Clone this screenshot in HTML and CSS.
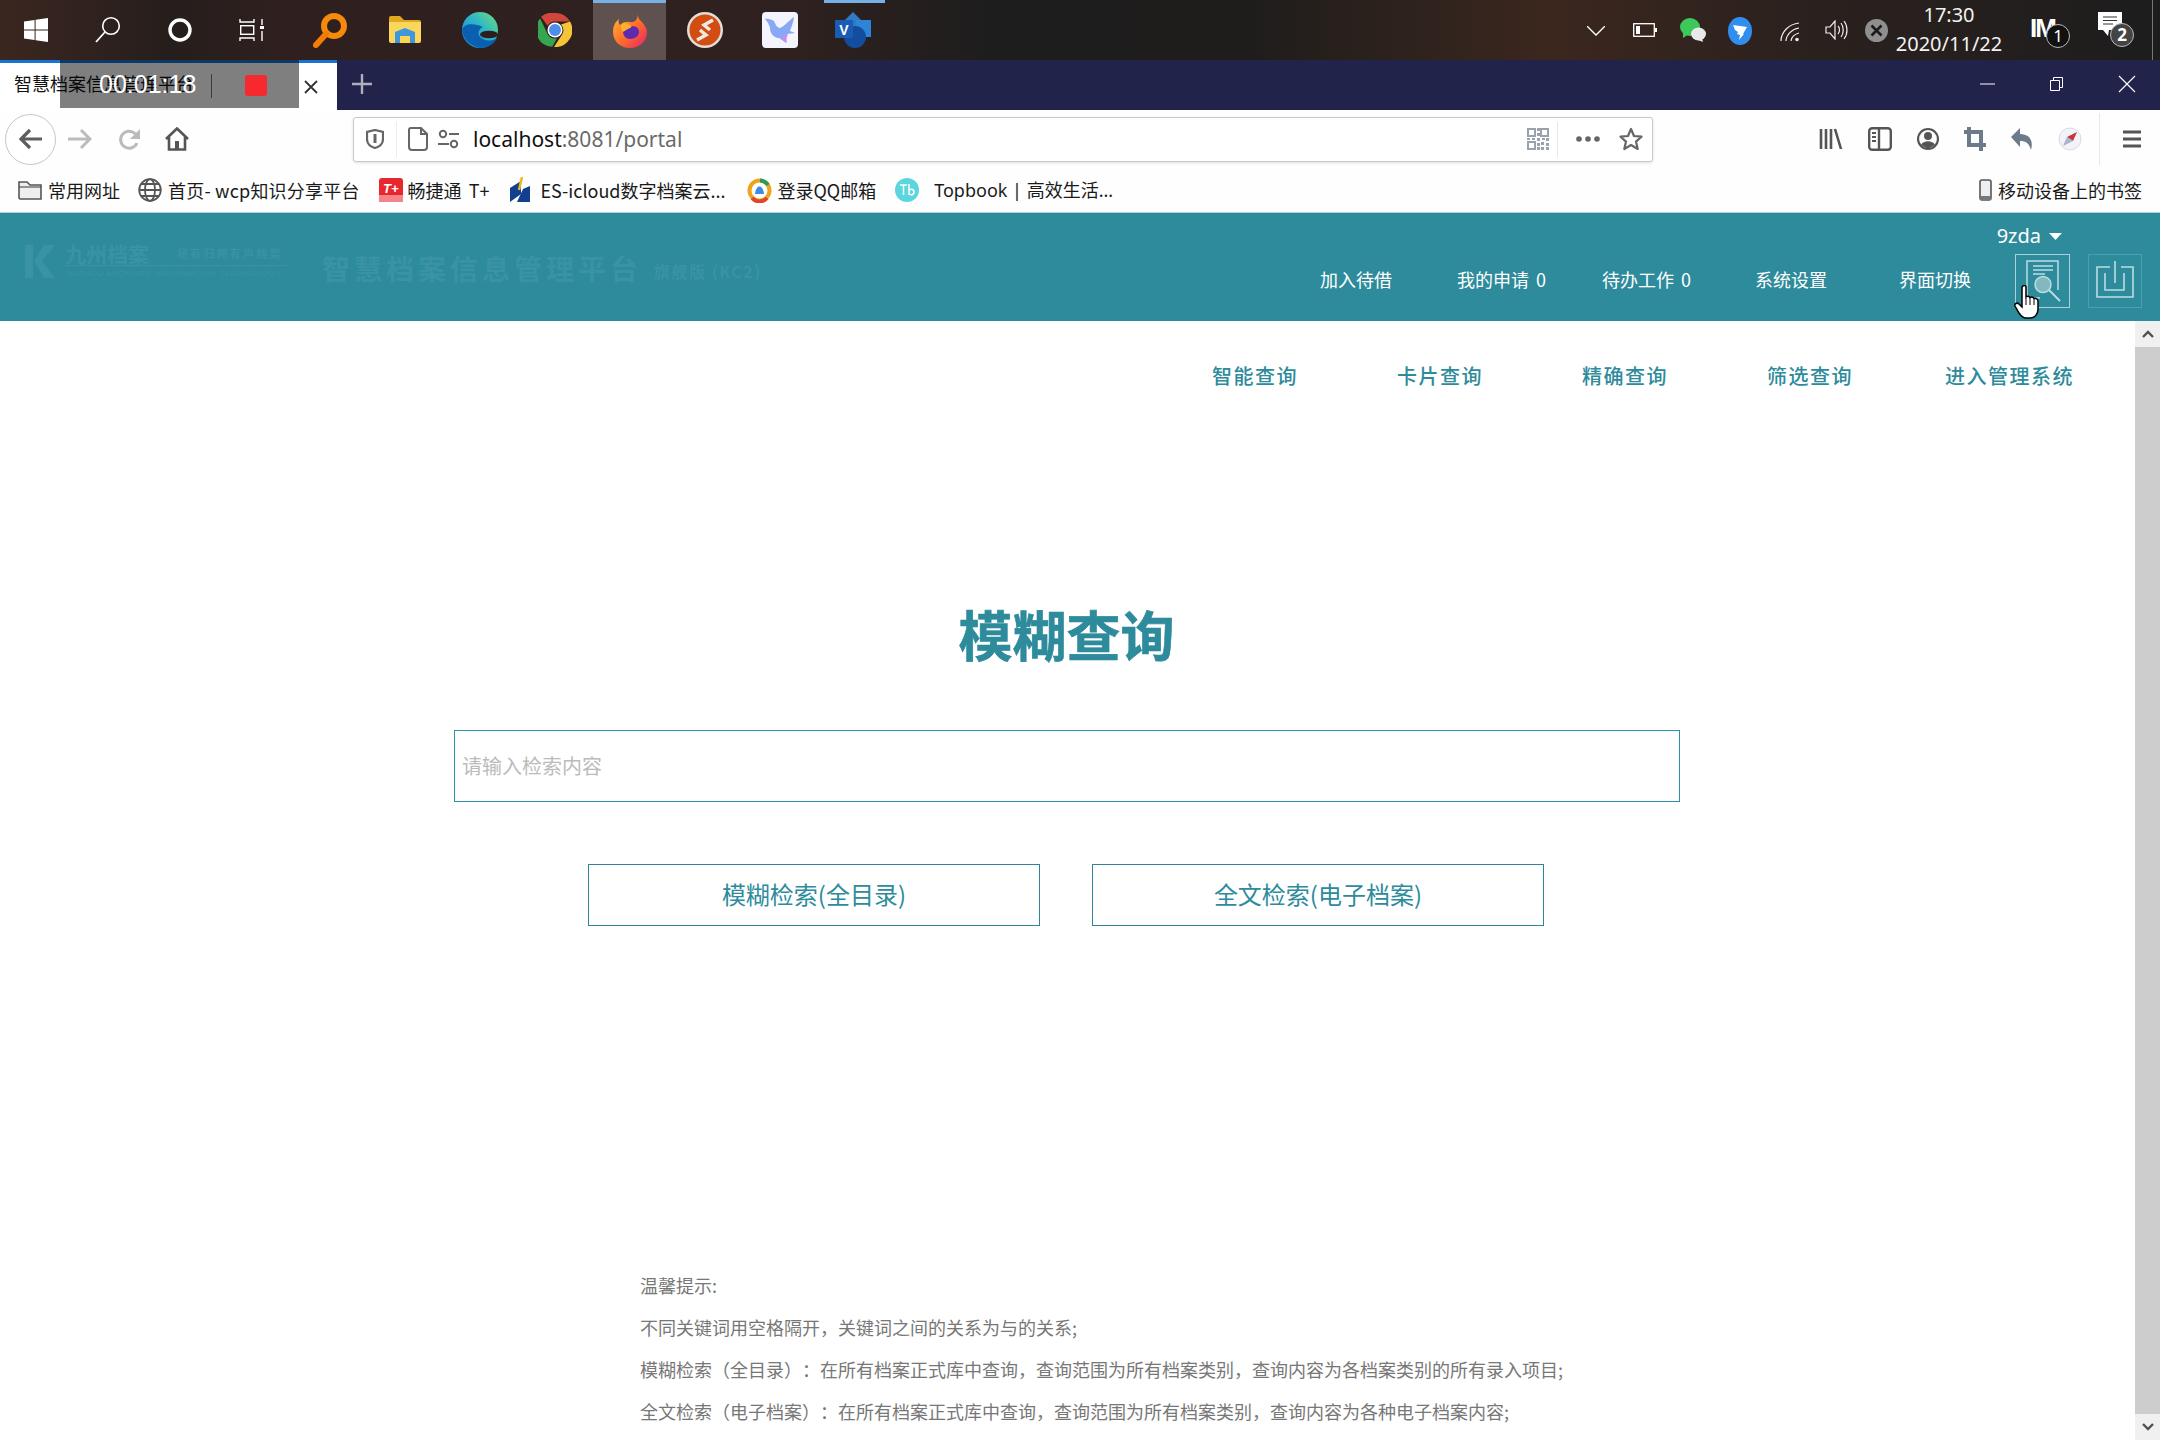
FILE: index.html
```html
<!DOCTYPE html>
<html lang="zh-CN">
<head>
<meta charset="utf-8">
<title>智慧档案信息管理平台</title>
<link rel="stylesheet" href="styles.css">
</head>
<body>
<div class="screen">
  <div class="taskbar">
    <div class="tb-start">
      <span class="tb-sys"><svg width="24" height="24" viewBox="0 0 24 24"><path fill="#fff" d="M0 3.4 10.6 1.9V11.4H0zM11.6 1.8 24 0V11.4H11.6zM0 12.6H10.6V22.1L0 20.6zM11.6 12.6H24V24L11.6 22.2z"/></svg></span>
      <span class="tb-sys"><svg width="26" height="28" viewBox="0 0 26 28"><circle cx="16" cy="10" r="8.3" fill="none" stroke="#fff" stroke-width="1.6"/><path d="M10 16 1 26" stroke="#fff" stroke-width="1.8"/></svg></span>
      <span class="tb-sys"><svg width="24" height="24" viewBox="0 0 24 24"><circle cx="12" cy="12" r="10" fill="none" stroke="#fff" stroke-width="3.4"/></svg></span>
      <span class="tb-sys"><svg width="26" height="24" viewBox="0 0 26 24"><path d="M1 1V4H15V1M1 23V20H15V23" fill="none" stroke="#fff" stroke-width="1.4"/><rect x="1.7" y="7.7" width="13" height="8.6" fill="none" stroke="#fff" stroke-width="1.4"/><path d="M23 1V7M23 13V23" stroke="#fff" stroke-width="1.4"/><rect x="21" y="8" width="4" height="3" fill="#fff"/></svg></span>
    </div>
    <div class="tb-apps">
      <span class="tb-app"><svg width="34" height="36" viewBox="0 0 34 36"><circle cx="21" cy="14" r="10" fill="none" stroke="#f58a0b" stroke-width="6"/><path d="M13 22 3 33" stroke="#f27c05" stroke-width="6" stroke-linecap="round"/></svg></span>
      <span class="tb-app"><svg width="34" height="28" viewBox="0 0 34 28"><path fill="#e0a820" d="M1 2a2 2 0 0 1 2-2H12L16 4H31A2 2 0 0 1 33 6V10H1z"/><path fill="#fad65c" d="M1 6H33V25A2 2 0 0 1 31 27H3A2 2 0 0 1 1 25z"/><path fill="#3f97dc" d="M7 27V16L17 12 27 16V27H22V20H12V27z"/><rect x="12" y="21" width="10" height="6" fill="#fbd650"/></svg></span>
      <span class="tb-app"><svg width="36" height="36" viewBox="0 0 36 36"><defs><linearGradient id="eg" x1="0" y1="1" x2="1" y2="0"><stop offset="0" stop-color="#1a86d8"/><stop offset=".55" stop-color="#2db5c8"/><stop offset="1" stop-color="#72e07c"/></linearGradient></defs><circle cx="18" cy="18" r="18" fill="url(#eg)"/><path fill="#0b5fb0" d="M0 18C1 27 8 34 18 36 26 36 32 32 35 26 28 30 22 29 18 25 15 21 17 17 21 15 12 11 2 11 0 18z"/><ellipse cx="27" cy="22.500" rx="9" ry="3.800" fill="#2b1f1f"/></svg></span>
      <span class="tb-app"><svg width="34" height="34" viewBox="0 0 34 34"><path fill="#d1463a" d="M17 0A17 17 0 0 1 32 8.500H17A8.500 8.500 0 0 0 9.600 12.800L3 3.800A17 17 0 0 1 17 0z"/><path fill="#36a550" d="M2.200 5.500 9.700 21.300A8.500 8.500 0 0 0 19 25.300L14.200 33.800A17 17 0 0 1 2.200 5.500z"/><path fill="#f5c437" d="M32 8.500A17 17 0 0 1 16 34L24.300 21.300A8.500 8.500 0 0 0 23 11.500z"/><circle cx="17" cy="17" r="7.500" fill="#fff"/><circle cx="17" cy="17" r="6" fill="#4d8fe8"/></svg></span>
      <span class="tb-app active"><svg width="34" height="36" viewBox="0 0 34 36"><defs><linearGradient id="ff" x1="0" y1="0" x2="1" y2="1"><stop offset="0" stop-color="#ffbd2e"/><stop offset=".55" stop-color="#ff6a2a"/><stop offset="1" stop-color="#e3206e"/></linearGradient></defs><path fill="url(#ff)" d="M24 0c1 4 1 6 4 9 4 4 6 8 6 11 0 9-7 16-17 16S0 29 0 20c0-6 2-10 6-13-1 3 0 5 1 6 2-3 7-4 10-3 6 1 9-4 7-10z"/><path fill="#5e2bb0" d="M10 19c1-4 5-5 9-5 5 0 7 3 7 6 0 4-4 7-9 7-4 0-7-3-7-8z"/><path fill="#ffb02e" d="M8 13c3-3 6-2 9 0 2 1 2 2 0 3-3 1-5 3-7 4-1-2-3-4-2-7z"/></svg></span>
      <span class="tb-app"><svg width="36" height="36" viewBox="0 0 36 36"><circle cx="18" cy="18" r="18" fill="#e3ddd8"/><circle cx="18" cy="18" r="15.500" fill="#d24d12"/><path d="M26 8 17 13 23 18M13 18 19 23 10 28" fill="none" stroke="#f1e8e3" stroke-width="3.400"/></svg></span>
      <span class="tb-app"><svg width="36" height="36" viewBox="0 0 36 36"><rect width="36" height="36" rx="4" fill="#f4f4fd"/><path fill="#86a8f5" d="M3 7c3-1 7 1 9 2 2 5 4 7 6 7 5-2 8-7 14-11-1 7-3 11-4 14l5 2-8 1c-2 3-3 4-1 9-4-3-6-5-8-5-5-1-8-5-8-10C7 12 5 9 3 7z"/><path fill="#c48df0" d="M19 25c2-2 5-2 7-3-1 3-2 4-1 9-3-2-5-4-6-6z"/></svg></span>
      <span class="tb-app app-visio"><svg width="36" height="36" viewBox="0 0 36 36"><path fill="#2e7cc9" d="M18 0 27 9 18 18 9 9z"/><rect x="21" y="8" width="15" height="17" fill="#2e84d8"/><circle cx="20" cy="25" r="11" fill="#134d9e"/><rect x="0" y="8" width="18" height="18" rx="1" fill="#1a5cb4"/><text class="visio-v" x="9" y="23">V</text></svg></span>
    </div>
    <div class="tray">
      <svg class="t-chev" width="18" height="10" viewBox="0 0 18 10"><path d="M0 0 9 9 18 0" fill="none" stroke="#fff" stroke-width="1.300"/></svg>
      <svg class="t-batt" width="24" height="14" viewBox="0 0 24 14"><rect x=".7" y=".7" width="20.600" height="12.600" fill="none" stroke="#fff" stroke-width="1.300"/><rect x="3" y="3" width="4" height="8" fill="#fff"/><rect x="22" y="5" width="2" height="4" fill="#fff"/></svg>
      <svg class="t-wx" width="26" height="25" viewBox="0 0 26 25"><ellipse cx="10" cy="9" rx="10" ry="9" fill="#3dc95a"/><path d="M3 14 3 20 9 16z" fill="#3dc95a"/><ellipse cx="18.500" cy="16" rx="7.500" ry="6.500" fill="#e9e9e9"/><path d="M22 20l1 4-5-2z" fill="#e9e9e9"/></svg>
      <svg class="t-ding" width="24" height="28" viewBox="0 0 24 28"><ellipse cx="12" cy="14" rx="12" ry="14" fill="#2f8ef0"/><path fill="#fff" d="M5 8 19 10 15 17 16 17 11 23 12 18 9 17 10 15 7 13z"/></svg>
      <svg class="t-wifi" width="20" height="20" viewBox="0 0 20 20"><g fill="none" stroke="#eee" stroke-width="1.200"><path d="M1 19C1 10 9 2 19 1"/><path d="M6 19C6 13 12 7 19 6"/><path d="M11 19C11 15 15 12 19 11"/></g><circle cx="17" cy="17.500" r="1.800" fill="#eee"/></svg>
      <svg class="t-vol" width="23" height="20" viewBox="0 0 23 20"><path d="M1 7H5L10 1V19L5 13H1z" fill="none" stroke="#eee" stroke-width="1.200"/><path d="M13 6C15 8 15 12 13 14M16 3C19 7 19 13 16 17M19 1C23 6 23 14 19 19" fill="none" stroke="#eee" stroke-width="1.200"/></svg>
      <svg class="t-x" width="23" height="23" viewBox="0 0 23 23"><circle cx="11.500" cy="11.500" r="11.500" fill="#8f8f8f"/><path d="M6.500 6.500 16.500 16.500M16.500 6.500 6.500 16.500" stroke="#1c1c1c" stroke-width="2.600"/></svg>
      <div class="clock"><span>17:30</span><span>2020/11/22</span></div>
      <div class="t-m"><span class="t-m-l">IM</span><span class="t-badge dark">1</span></div>
      <div class="t-note"><svg width="24" height="28" viewBox="0 0 24 28"><path fill="#fff" d="M0 0H24V18H11L10 24 5 18H0z"/><path d="M5 5H19M5 8.500H19M5 12H15" stroke="#333" stroke-width="1.200"/></svg><span class="t-badge gray">2</span></div>
      <i class="t-edge"></i>
    </div>
  </div>

  <div class="tabstrip">
    <div class="tab"><span class="tab-title">智慧档案信息管理平台</span>
      <svg class="tab-x" width="14" height="14" viewBox="0 0 14 14"><path d="M1 1 13 13M13 1 1 13" stroke="#333" stroke-width="1.800"/></svg>
    </div>
    <svg class="tab-plus" width="20" height="20" viewBox="0 0 20 20"><path d="M10 0V20M0 10H20" stroke="#aeaebc" stroke-width="2.400"/></svg>
    <div class="winctl">
      <svg width="16" height="16" viewBox="0 0 16 16"><path d="M0 8H15" stroke="#fff" stroke-width="1"/></svg>
      <svg width="16" height="16" viewBox="0 0 16 16"><path d="M1.500 4.500H10.500V14.500H1.500zM4.500 4.500V1.500H13.500V11.500H10.500" fill="none" stroke="#fff" stroke-width="1"/></svg>
      <svg width="18" height="18" viewBox="0 0 18 18"><path d="M1 1 17 17M17 1 1 17" stroke="#fff" stroke-width="1.100"/></svg>
    </div>
    <div class="recorder">
      <span class="rec-time">00:01:18</span>
      <i class="rec-div"></i>
      <i class="rec-stop"></i>
    </div>
  </div>

  <div class="toolbar">
    <div class="nav-btns">
      <span class="back"><svg width="26" height="22" viewBox="0 0 26 22"><path d="M24 11H3M12 2 3 11 12 20" fill="none" stroke="#5e5e5e" stroke-width="3.200"/></svg></span>
      <svg class="n-fwd" width="24" height="22" viewBox="0 0 24 22"><path d="M0 11H21M13 2 22 11 13 20" fill="none" stroke="#bbb" stroke-width="3"/></svg>
      <svg class="n-rel" width="23" height="23" viewBox="0 0 23 23"><path d="M19 15A8.500 8.500 0 1 1 17 5.500L20 8.500" fill="none" stroke="#bbb" stroke-width="3"/><path d="M22 1V11H12z" fill="#bbb"/></svg>
      <svg class="n-home" width="24" height="24" viewBox="0 0 24 24"><path d="M1 12 12 1.500 23 12M4 10V22.500H20V10" fill="none" stroke="#555" stroke-width="2.600"/><rect x="10" y="14" width="4" height="8" fill="#555"/></svg>
    </div>
    <div class="urlbar">
      <svg class="u-shield" width="18" height="20" viewBox="0 0 18 20"><path d="M9 1 17 3V10C17 15 13 18 9 19 5 18 1 15 1 10V3z" fill="none" stroke="#666" stroke-width="2.200"/><path d="M9 5V14" stroke="#666" stroke-width="3"/></svg>
      <i class="u-sep"></i>
      <svg class="u-page" width="20" height="24" viewBox="0 0 20 24"><path d="M3 1H13L19 7V20A3 3 0 0 1 16 23H4A3 3 0 0 1 1 20V3A2 2 0 0 1 3 1zM13 1V7H19" fill="none" stroke="#666" stroke-width="2"/></svg>
      <svg class="u-perm" width="21" height="20" viewBox="0 0 21 20"><circle cx="5" cy="5" r="3.200" fill="none" stroke="#666" stroke-width="2"/><circle cx="16" cy="15" r="3.200" fill="none" stroke="#666" stroke-width="2"/><path d="M11 5H21M0 15H11" stroke="#666" stroke-width="2.200"/></svg>
      <span class="u-text"><b>localhost</b>:8081/portal</span>
      <svg class="u-qr" width="22" height="22" viewBox="0 0 22 22"><g fill="none" stroke="#9aa3ad" stroke-width="2"><rect x="1" y="1" width="7" height="7"/><rect x="14" y="1" width="7" height="7"/><rect x="1" y="14" width="7" height="7"/></g><path fill="#9aa3ad" d="M10 0h3v3h-3zM10 5h3v3h-3zM0 10h3v2h-3zM5 10h3v2h-3zM10 10h3v3h-3zM15 10h3v2h-3zM19 10h3v3h-3zM10 15h3v3h-3zM14 14h3v3h-3zM19 15h3v3h-3zM14 19h3v3h-3zM19 19h3v3h-3zM10 19h3v3h-3z"/></svg>
      <i class="u-sep2"></i>
      <svg class="u-dots" width="24" height="6" viewBox="0 0 24 6"><circle cx="3" cy="3" r="2.800" fill="#666"/><circle cx="12" cy="3" r="2.800" fill="#666"/><circle cx="21" cy="3" r="2.800" fill="#666"/></svg>
      <svg class="u-star" width="24" height="24" viewBox="0 0 24 24"><path d="M12 2 15 9 22.500 9.700 17 14.600 18.700 22 12 18 5.300 22 7 14.600 1.500 9.700 9 9z" fill="none" stroke="#666" stroke-width="2.200" stroke-linejoin="round"/></svg>
    </div>
    <div class="tools">
      <svg width="24" height="24" viewBox="0 0 24 24"><path d="M2 2V22M7 2V22M12 2V22M16 2 22 22" fill="none" stroke="#555" stroke-width="2.600"/></svg>
      <svg width="24" height="24" viewBox="0 0 24 24"><rect x="1.200" y="1.200" width="21.600" height="21.600" rx="3" fill="none" stroke="#555" stroke-width="2.400"/><path d="M11 1V23" stroke="#555" stroke-width="2.400"/><path d="M4 6H8M4 10H8M4 14H8" stroke="#555" stroke-width="2"/></svg>
      <svg width="22" height="24" viewBox="0 0 22 24"><circle cx="11" cy="12" r="10" fill="none" stroke="#555" stroke-width="2.200"/><circle cx="11" cy="9" r="4" fill="#555"/><path d="M4 18C6 13 16 13 18 18L11 22z" fill="#555"/></svg>
      <svg width="22" height="24" viewBox="0 0 22 24"><path d="M5 0V18H22M0 5H17V24" fill="none" stroke="#6d7a8a" stroke-width="4"/></svg>
      <svg width="22" height="24" viewBox="0 0 22 24"><path d="M9 1V7C17 7 23 12 20 23 18 16 15 14 9 14V20L0 10z" fill="#6d7a8a"/></svg>
      <svg width="24" height="24" viewBox="0 0 24 24"><circle cx="12" cy="12" r="11" fill="#f2f3f7" stroke="#d6dbe6"/><path d="M19 5 15 14 9 10z" fill="#c9343e"/><path d="M5 19 15 14 9 10z" fill="#aab4cf"/></svg>
      <i class="tools-sep"></i>
      <svg width="18" height="18" viewBox="0 0 18 18"><path d="M0 2H18M0 9H18M0 16H18" stroke="#555" stroke-width="3"/></svg>
    </div>
  </div>

  <div class="bookmarks">
    <span class="bm b1"><svg width="24" height="20" viewBox="0 0 24 20"><path d="M1 18V2H9L12 5H23V19H2z" fill="#eee" stroke="#555" stroke-width="1.600"/><path d="M1 7H23" stroke="#555" stroke-width="1.200"/></svg>常用网址</span>
    <span class="bm b2"><svg width="24" height="24" viewBox="0 0 24 24"><g fill="none" stroke="#555" stroke-width="1.800"><circle cx="12" cy="12" r="10.800"/><ellipse cx="12" cy="12" rx="5" ry="10.800"/><path d="M1 12H23M3 6H21M3 18H21"/></g></svg>首页- wcp知识分享平台</span>
    <span class="bm b3"><svg width="24" height="24" viewBox="0 0 24 24"><rect width="24" height="24" rx="3" fill="#e8262e"/><rect y="17" width="24" height="7" fill="#f4848a"/><text class="bm-t" x="4" y="15">T+</text></svg>畅捷通 T+</span>
    <span class="bm b4"><svg width="23" height="26" viewBox="0 0 23 26"><path d="M2 11 13 4V17L2 25z" fill="#12408f"/><path d="M14 0 11 13" stroke="#f0b429" stroke-width="2.500"/><path d="M15 12 22 9V25H9z" fill="#12408f"/></svg>ES-icloud数字档案云...</span>
    <span class="bm b5"><svg width="25" height="25" viewBox="0 0 25 25"><circle cx="12.500" cy="12.500" r="10" fill="#fff" stroke="#f0a41c" stroke-width="4"/><path d="M5 20A10 10 0 0 0 20 20" fill="none" stroke="#e2452e" stroke-width="4"/><path d="M21 7A10 10 0 0 0 13 2.500" fill="none" stroke="#2b9a55" stroke-width="4"/><path d="M8 16C9 6 16 6 17 16z" fill="#3a8de0"/></svg>登录QQ邮箱</span>
    <span class="bm b6"><svg width="24" height="24" viewBox="0 0 24 24"><circle cx="12" cy="12" r="12" fill="#5cd6de"/><path d="M5 7H12M8.500 7V17M14 6V17M14 13C15 10 19 11 19 14S15 18 14 15" fill="none" stroke="#fff" stroke-width="1.500"/></svg><span class="b6-t">Topbook | 高效生活...</span></span>
    <span class="bm b7"><svg width="13" height="22" viewBox="0 0 13 22"><rect x="1" y="1" width="11" height="20" rx="2" fill="#eee" stroke="#555" stroke-width="1.600"/><rect x="1" y="17" width="11" height="4" fill="#777"/></svg>移动设备上的书签</span>
  </div>

  <header class="apphead">
    <div class="brand">
      <div class="logo">
        <svg width="30" height="33" viewBox="0 0 30 33"><path d="M0 0H8V33H0zM30 0 17 16 30 33H19L9 16 19 0z" fill="#3a93a2"/></svg>
        <div class="logo-txt">
          <div class="logo-top"><span>九州档案</span><small>秘有归朔有声档案</small></div>
          <div class="logo-en">JIUZHOU ARCHIVES INFORMATION TECHNOLOGY</div>
        </div>
      </div>
      <div class="brand-name">智慧档案信息管理平台</div>
      <div class="brand-ed">旗舰版 (KC2)</div>
    </div>
    <div class="headright">
      <div class="user">9zda<svg width="13" height="7" viewBox="0 0 13 7"><path d="M0 0H13L6.500 7z" fill="#fff"/></svg></div>
      <div class="headnav">
        <nav class="mainnav">
          <a>加入待借</a><a>我的申请 0</a><a>待办工作 0</a><a>系统设置</a><a>界面切换</a>
        </nav>
        <span class="hbtn on"><svg width="36" height="42" viewBox="0 0 36 42"><g fill="none" stroke="#bcdde2" stroke-width="1.500"><path d="M33 30V1H2V38H15"/><path d="M8 6H28M8 10H28M8 14H20"/><circle cx="18" cy="24.500" r="8" fill="#a7cdd2" fill-opacity=".7"/><path d="M24 30 35 41" stroke-width="2"/></g></svg></span>
        <span class="hbtn"><svg width="38" height="40" viewBox="0 0 38 40"><g fill="none" stroke="#bcdde2" stroke-width="1.600"><path d="M14 6H1V36H37V6H25"/><path d="M9 12V29H28V12"/><path d="M19 0V22"/></g></svg></span>
      </div>
    </div>
  </header>

  <div class="page">
    <main class="content">
      <nav class="subnav">
        <a>智能查询</a><a>卡片查询</a><a>精确查询</a><a>筛选查询</a><a>进入管理系统</a>
      </nav>
      <h1 class="title">模糊查询</h1>
      <div class="searchbox"><input class="search" type="text" placeholder="请输入检索内容"></div>
      <div class="actions">
        <button class="act">模糊检索(全目录)</button>
        <button class="act">全文检索(电子档案)</button>
      </div>
      <div class="tips">
        <p>温馨提示:</p>
        <p>不同关键词用空格隔开，关键词之间的关系为与的关系;</p>
        <p>模糊检索（全目录）：在所有档案正式库中查询，查询范围为所有档案类别，查询内容为各档案类别的所有录入项目;</p>
        <p>全文检索（电子档案）：在所有档案正式库中查询，查询范围为所有档案类别，查询内容为各种电子档案内容;</p>
      </div>
    </main>
    <aside class="scrollbar">
      <span class="sb-btn"><svg width="12" height="8" viewBox="0 0 12 8"><path d="M1 7 6 2 11 7" fill="none" stroke="#505050" stroke-width="2.400"/></svg></span>
      <i class="sb-thumb"></i>
      <span class="sb-btn"><svg width="12" height="8" viewBox="0 0 12 8"><path d="M1 1 6 6 11 1" fill="none" stroke="#505050" stroke-width="2.400"/></svg></span>
    </aside>
  </div>

  <svg class="cursor" width="26" height="34" viewBox="0 0 26 34"><path d="M8 2C9 0 12 0 12 2V12C13 11 15 11 16 12.500 17 12 19 12 20 13.500 22 13 24 14 24 16V24C24 29 21 33 16 33H12C9 33 7 31 5 28L1 21C0 19 3 17 5 19L8 22z" fill="#fff" stroke="#000" stroke-width="1.500"/><path d="M12 13V20M16 13V20M20 14V20" stroke="#000" stroke-width="1"/></svg>
</div>
</body>
</html>
```

FILE: styles.css
```css
* { box-sizing: border-box; }
html, body { margin: 0; padding: 0; }
body { width: 2160px; height: 1440px; overflow: hidden; background: #fff; font-family: "Noto Sans CJK SC", "Noto Sans", sans-serif; color: #111; text-spacing-trim: space-all; }
.screen { position: relative; width: 2160px; height: 1440px; display: flex; flex-direction: column; overflow: hidden; }

/* taskbar */
.taskbar { height: 60px; flex: none; display: flex; align-items: stretch; background: linear-gradient(90deg, #3b2620 0, #261e1c 170px, #2f201f 290px, #2e211f 800px, #1d1d1d 1000px, #1f1d1c 1250px, #3b271e 1550px, #2b211e 1800px, #1d1d1d 2160px); }
.tb-start { display: flex; width: 293px; flex: none; }
.tb-sys { width: 72px; display: flex; align-items: center; justify-content: center; }
.tb-apps { display: flex; gap: 2px; }
.tb-app { width: 73px; display: flex; align-items: center; justify-content: center; border-top: 3px solid transparent; padding-bottom: 3px; }
.tb-app.active { background: #5f5150; border-top-color: #76b0e4; }
.app-visio { border-top-color: #76b0e4; margin-left: 6px; width: 61px; padding-right: 3px; }
.visio-v { font: 700 14px "Liberation Sans", sans-serif; fill: #fff; text-anchor: middle; }
.tray { margin-left: auto; display: flex; align-items: center; width: 574px; flex: none; position: relative; }
.t-chev { margin-left: 1px; margin-top: 2px; }
.t-batt { margin-left: 28px; }
.t-wx { margin-left: 23px; }
.t-ding { margin-left: 22px; margin-top: 2px; }
.t-wifi { margin-left: 28px; margin-top: 3px; }
.t-vol { margin-left: 25px; }
.t-x { margin-left: 17px; }
.clock { width: 112px; margin-left: 5px; display: flex; flex-direction: column; align-items: center; color: #f2f2f2; font: 20px/1 "Noto Sans", sans-serif; gap: 9px; margin-top: -1px; }
.t-m { position: relative; width: 36px; height: 30px; margin-left: 25px; margin-top: -2px; }
.t-m-l { color: #fff; font: 700 26px/28px "Liberation Sans", sans-serif; letter-spacing: -2px; }
.t-badge { position: absolute; width: 24px; height: 24px; border-radius: 50%; border: 1px solid #bbb; color: #fff; font: 700 17px/22px "Noto Sans", sans-serif; text-align: center; }
.t-badge.dark { background: #111; right: -4px; top: 10px; font-weight: 400; }
.t-badge.gray { background: #444; left: 12px; top: 11px; }
.t-note { position: relative; width: 38px; height: 36px; margin-left: 32px; margin-top: -1px; }
.t-note svg { display: block; }
.t-edge { position: absolute; right: 7px; top: 0; bottom: 0; width: 1px; background: #777; }

/* tab strip */
.tabstrip { position: relative; height: 50px; flex: none; background: #21234a; display: flex; align-items: stretch; }
.tab { width: 337px; background: #fff; border-top: 3px solid #1a73d0; display: flex; align-items: center; justify-content: space-between; padding: 0 19px 0 14px; }
.tab-title { font-size: 18px; color: #111; line-height: 44px; white-space: nowrap; margin-top: -8px; }
.tab-plus { align-self: center; margin: -2px 0 0 15px; }
.winctl { margin-left: auto; display: flex; align-items: center; gap: 53px; padding: 0 24px 2px 0; }
.recorder { position: absolute; left: 60px; top: 0; width: 239px; height: 48px; background: rgba(0, 0, 0, .5); display: flex; align-items: center; }
.rec-time { color: #fff; font: 25px/1 "Liberation Sans", sans-serif; margin-left: 39px; width: 112px; white-space: nowrap; padding-top: 1px; }
.rec-div { width: 1px; height: 24px; background: #3c3c3c; margin-top: 3px; }
.rec-stop { width: 22px; height: 21px; border-radius: 3px; background: #f62a2e; margin-left: 33px; margin-top: 3px; }

/* toolbar */
.toolbar { height: 68px; flex: none; background: #fefefe; display: flex; align-items: center; padding-bottom: 10px; }
.nav-btns { width: 353px; flex: none; display: flex; align-items: center; padding-left: 5px; }
.back { width: 51px; height: 51px; border: 1px solid #c6c6c6; border-radius: 50%; display: flex; align-items: center; justify-content: center; background: #fff; }
.n-fwd { margin-left: 12px; }
.n-rel { margin-left: 26px; }
.n-home { margin-left: 24px; }
.urlbar { width: 1300px; height: 45px; flex: none; background: #fff; border: 1px solid #c9c9c9; border-radius: 3px; box-shadow: 0 1px 3px rgba(0, 0, 0, .12); display: flex; align-items: center; padding-left: 12px; }
.u-sep { width: 1px; height: 35px; background: #ececec; margin-left: 12px; }
.u-page { margin-left: 11px; }
.u-perm { margin-left: 10px; }
.u-text { margin-left: 14px; font: 21px/1 "Noto Sans", sans-serif; color: #6a6a6a; width: 1054px; flex: none; white-space: nowrap; }
.u-text b { font-weight: 400; color: #111; }
.u-sep2 { width: 1px; height: 35px; background: #e6e6e6; margin-left: 8px; }
.u-qr { flex: none; }
.u-dots { margin-left: 18px; }
.u-star { margin-left: 19px; }
.tools { display: flex; align-items: center; margin-left: 166px; gap: 25px; }
.tools-sep { width: 1px; height: 52px; background: #e6e6e6; margin: 0 -2px 0 -8px; }

/* bookmarks */
.bookmarks { height: 34px; flex: none; background: #fefefe; display: flex; align-items: center; padding-left: 18px; padding-bottom: 10px; }
.bm { display: inline-flex; align-items: center; gap: 6px; font-size: 18px; color: #1a1a1a; white-space: nowrap; line-height: 26px; }
.b2 { margin-left: 18px; letter-spacing: .2px; }
.b3 { margin-left: 19px; gap: 5px; word-spacing: 3px; }
.b4 { margin-left: 19px; gap: 9px; }
.b5 { margin-left: 21px; gap: 6px; }
.b6 { margin-left: 19px; gap: 15px; }
.b6-t { font-family: "Noto Sans", "Noto Sans CJK SC", sans-serif; }
.b7 { margin-left: auto; margin-right: 18px; }
.bm-t { font: italic 700 13px "Liberation Sans", sans-serif; fill: #fff; }

/* app header */
.apphead { height: 109px; flex: none; background: #2d8b9c; border-top: 1px solid #a9d4dc; display: flex; justify-content: space-between; }
.brand { display: flex; align-items: center; padding: 4px 0 0 25px; color: #3a93a2; height: 90px; margin-top: 8px; }
.logo { display: flex; align-items: center; gap: 10px; width: 293px; flex: none; margin-top: -14px; }
.logo-txt { width: 222px; }
.logo-top { display: flex; align-items: center; gap: 28px; font-size: 21px; font-weight: 700; line-height: 24px; border-bottom: 1px solid #3a93a2; white-space: nowrap; }
.logo-top small { font-size: 11px; letter-spacing: 2.2px; font-weight: 700; }
.logo-en { font: 8px/16px "Liberation Sans", sans-serif; white-space: nowrap; letter-spacing: .6px; }
.brand-name { font-size: 28px; font-weight: 700; letter-spacing: 4px; margin-left: 4px; white-space: nowrap; line-height: 36px; }
.brand-ed { font-size: 16px; letter-spacing: 1.5px; margin-left: 12px; white-space: nowrap; font-weight: 700; margin-top: 6px; }
.headright { display: flex; flex-direction: column; align-items: flex-end; padding-right: 18px; }
.user { color: #fff; font: 20px/24px "Noto Sans", sans-serif; display: flex; align-items: center; gap: 8px; margin: 11px 80px 0 0; height: 24px; }
.headnav { display: flex; align-items: center; margin-top: 6px; }
.mainnav { display: flex; align-items: center; margin: -5px 44px 0 0; }
.mainnav a { color: #fff; font-size: 18px; line-height: 26px; white-space: nowrap; word-spacing: 3px; }
.mainnav a:nth-child(1) { margin-right: 65px; }
.mainnav a:nth-child(2) { margin-right: 56px; }
.mainnav a:nth-child(3) { margin-right: 64px; }
.mainnav a:nth-child(4) { margin-right: 72px; }
.hbtn { width: 54px; height: 54px; border: 1px solid #4e9fad; display: flex; align-items: center; justify-content: center; }
.hbtn.on { width: 55px; border-color: #a6d2d9; margin-right: 18px; }

/* page */
.page { flex: 1; min-height: 0; display: flex; background: #fff; }
.content { flex: 1; min-width: 0; display: flex; flex-direction: column; }
.subnav { display: flex; padding: 41px 0 0 1212px; height: 114px; }
.subnav a { color: #2d8b9c; font-size: 20px; font-weight: 500; letter-spacing: 1.5px; line-height: 28px; white-space: nowrap; margin-right: 99px; }
.subnav a:nth-child(4) { margin-right: 92px; }
.title { margin: 162px 0 0; text-align: center; color: #2d8b9c; font-size: 54px; line-height: 74px; font-weight: 700; height: 74px; -webkit-text-stroke: .6px #2d8b9c; padding-right: 2px; }
.searchbox { margin-top: 59px; padding-left: 454px; }
.search { display: block; width: 1226px; height: 72px; border: 1px solid #2a93a5; background: #fff; padding: 0 7px 2px; font: 20px "Noto Sans CJK SC", sans-serif; outline: none; }
.search::placeholder { color: #bbb; opacity: 1; }
.actions { display: flex; gap: 52px; padding-left: 588px; margin-top: 62px; }
.act { width: 452px; height: 62px; background: #fff; border: 1px solid #2f8496; color: #2d8b9c; font: 24px "Noto Sans CJK SC", sans-serif; padding: 0 0 4px; }
.tips { margin-top: 338px; padding-left: 640px; color: #777; font-size: 18px; line-height: 42px; }
.tips p { margin: 0; white-space: nowrap; }
.scrollbar { width: 25px; flex: none; background: #f0f0f0; display: flex; flex-direction: column; }
.sb-btn { height: 26px; flex: none; display: flex; align-items: center; justify-content: center; }
.sb-thumb { flex: 1; background: #cdcdcd; }

.cursor { position: absolute; left: 2014px; top: 285px; }
```
